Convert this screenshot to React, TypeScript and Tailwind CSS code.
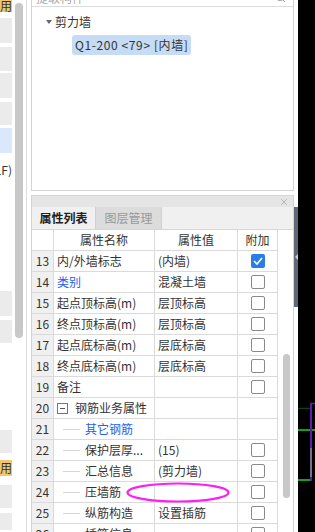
import React from "react";
import { Search, X } from "lucide-react";

type Row = {
  n: number;
  name: string;
  value?: string;
  blue?: boolean;
  check?: "on" | "off";
  group?: boolean;
  child?: boolean;
  mark?: boolean;
};

const rows: Row[] = [
  { n: 13, name: "内/外墙标志", value: "(内墙)", check: "on" },
  { n: 14, name: "类别", value: "混凝土墙", blue: true, check: "off" },
  { n: 15, name: "起点顶标高(m)", value: "层顶标高", check: "off" },
  { n: 16, name: "终点顶标高(m)", value: "层顶标高", check: "off" },
  { n: 17, name: "起点底标高(m)", value: "层底标高", check: "off" },
  { n: 18, name: "终点底标高(m)", value: "层底标高", check: "off" },
  { n: 19, name: "备注", value: "", check: "off" },
  { n: 20, name: "钢筋业务属性", group: true },
  { n: 21, name: "其它钢筋", child: true, blue: true },
  { n: 22, name: "保护层厚...", value: "(15)", child: true, check: "off" },
  { n: 23, name: "汇总信息", value: "(剪力墙)", child: true, check: "off" },
  { n: 24, name: "压墙筋", value: "", child: true, check: "off", mark: true },
  { n: 25, name: "纵筋构造", value: "设置插筋", child: true, check: "off" },
  { n: 26, name: "插筋信息", value: "", child: true, check: "off" },
];

// left list blocks, top to bottom
const leftItems = [
  { cls: "h-[12px] bg-[#f3c56e]", text: "用" },
  { cls: "mt-[6px] h-[25px] bg-[#ebebeb]" },
  { cls: "mt-[4px] h-[24px] bg-[#ebebeb]" },
  { cls: "mt-[2px] h-[25px] bg-[#ebebeb]" },
  { cls: "mt-[4px] h-[23px] bg-[#ebebeb]" },
  { cls: "mt-[3px] h-[25px] bg-[#dbe8fb]" },
  { cls: "mt-[10px] h-[14px]", text: "(1F)" },
  { cls: "mt-[114px] h-[25px] bg-[#ebebeb]" },
  { cls: "mt-[4px] h-[23px] bg-[#ebebeb]" },
  { cls: "mt-[87px] h-[23px] bg-[#ebebeb]" },
  { cls: "mt-[7px] h-[16px] bg-[#f3c56e]", text: "用" },
  { cls: "mt-[9px] h-[23px] bg-[#ebebeb]" },
  { cls: "mt-[5px] h-[17px] bg-[#ebebeb]" },
];

const CheckBox = ({ on }: { on: boolean }) =>
  on ? (
    <div className="w-[14px] h-[14px] rounded-[2px] bg-[#2b7de6] flex items-center justify-center">
      <svg width="10" height="8" viewBox="0 0 10 8">
        <path d="M1 4 L4 7 L9 1" fill="none" stroke="white" strokeWidth="1.6" />
      </svg>
    </div>
  ) : (
    <div className="w-[14px] h-[14px] rounded-[2px] border border-[#8a8a8a] bg-white" />
  );

export default function App() {
  return (
    <div className="flex w-[315px] h-[532px] overflow-hidden bg-white text-[12px] text-[#333] font-['Noto_Sans_CJK_SC',sans-serif]">
      {/* left strip */}
      <div className="flex w-[27px] shrink-0 border-r border-[#dcdcdc]">
        <div className="flex flex-col w-[12px] shrink-0">
          {leftItems.map((it, i) => (
            <div
              key={i}
              className={`${it.cls} shrink-0 overflow-hidden flex items-center justify-end leading-none whitespace-nowrap`}
            >
              {it.text}
            </div>
          ))}
        </div>
        <div className="ml-[3px] mt-[3px] w-[8px] h-[335px] rounded-full bg-[#c8c8c8]" />
      </div>
      <div className="w-[4px] shrink-0" />

      {/* main panel */}
      <div className="flex flex-col w-[263px] shrink-0">
        <div className="h-[191px] shrink-0 border-x border-b border-[#d4d4d4] flex flex-col">
          <div className="h-[7px] shrink-0 overflow-hidden border-b border-[#dcdcdc] flex justify-between pl-[4px] pr-[7px]">
            <span className="-mt-[10px] leading-[16px] text-[#aaa]">提取构件</span>
            <Search size={11} className="-mt-[8px] text-[#999]" />
          </div>
          <div className="flex items-center h-[18px] mt-[6px] pl-[14px]">
            <svg width="6" height="4" viewBox="0 0 6 4">
              <path d="M0 0 H6 L3 4 Z" fill="#666" />
            </svg>
            <span className="ml-[3px] leading-none">剪力墙</span>
          </div>
          <div className="flex mt-[4px] pl-[40px]">
            <div className="h-[20px] flex items-center px-[3px] rounded-[3px] bg-[#c6dcf4] leading-none whitespace-nowrap tracking-[0.6px]">
              Q1-200 &lt;79&gt; [内墙]
            </div>
          </div>
        </div>
        <div className="h-[4px] shrink-0" />

        <div className="flex flex-col flex-1 border-x border-[#d4d4d4] min-h-0">
          <div className="h-[12px] shrink-0 bg-[#e5e5e5] border-t border-[#d6d6d6] flex items-center justify-end pr-[4px]">
            <X size={10} className="text-[#999]" strokeWidth={1.5} />
          </div>
          <div className="h-[23px] shrink-0 bg-[#f0f0f0] border-b border-[#d6d6d6] flex">
            <div className="w-[64px] flex items-center justify-center font-bold text-[#222] border-r border-[#d0d0d0] leading-none">
              属性列表
            </div>
            <div className="w-[66px] flex items-center justify-center bg-[#dcdcdc] text-[#999] border-r border-[#d0d0d0] leading-none">
              图层管理
            </div>
          </div>

          <div className="flex">
            <div className="w-[246px] shrink-0 flex flex-col">
              <div className="grid grid-cols-[22px_101px_83px_40px] h-[21px] border-b border-[#dadada]">
                <div className="border-r border-[#dadada]" />
                <div className="border-r border-[#dadada] flex items-center justify-center leading-none">属性名称</div>
                <div className="border-r border-[#dadada] flex items-center justify-center leading-none">属性值</div>
                <div className="border-r border-[#dadada] flex items-center justify-center leading-none">附加</div>
              </div>
              {rows.map((r) => (
                <div
                  key={r.n}
                  className="relative grid grid-cols-[22px_101px_83px_40px] h-[21px] shrink-0 border-b border-[#dadada]"
                >
                  <div className="bg-[#f0f0f0] border-r border-[#dadada] flex items-center justify-center leading-none">
                    {r.n}
                  </div>
                  <div
                    className={`border-r border-[#dadada] flex items-center leading-none whitespace-nowrap overflow-hidden ${
                      r.blue ? "text-[#1d5ff0]" : ""
                    }`}
                  >
                    {r.group && (
                      <div className="ml-[3px] mr-[7px] w-[11px] h-[11px] border border-[#777] flex items-center justify-center">
                        <div className="w-[5px] h-px bg-[#555]" />
                      </div>
                    )}
                    {r.child && <div className="ml-[9px] mr-[5px] w-[17px] h-px bg-[#d6d6d6]" />}
                    {!r.group && !r.child && <div className="w-[3px]" />}
                    {r.name}
                  </div>
                  <div className="border-r border-[#dadada] flex items-center pl-[3px] leading-none whitespace-nowrap">
                    {r.value}
                  </div>
                  <div className="border-r border-[#dadada] flex items-center justify-center">
                    {r.check && <CheckBox on={r.check === "on"} />}
                  </div>
                  {r.mark && (
                    <svg className="absolute left-[94px] top-0" width="104" height="21" viewBox="0 0 104 21">
                      <ellipse cx="52" cy="10.5" rx="50.5" ry="9" fill="none" stroke="#ff1ef2" strokeWidth="2.2" />
                    </svg>
                  )}
                </div>
              ))}
            </div>
            <div className="w-[15px] shrink-0 pt-[124px] pl-[5px]">
              <div className="w-[7px] h-[144px] rounded-full bg-[#c8c8c8]" />
            </div>
          </div>
        </div>
      </div>

      {/* splitter */}
      <div className="w-[4px] shrink-0 pt-[207px]">
        <div className="h-[100px] bg-[#5e6975] pt-[47px] pl-[1px]">
          <svg width="3" height="6" viewBox="0 0 3 6">
            <path d="M3 0 V6 L0 3 Z" fill="#c9cdd2" />
          </svg>
        </div>
      </div>

      {/* canvas */}
      <div className="w-[17px] shrink-0 bg-black">
        <svg width="17" height="532" viewBox="0 0 17 532">
          <line x1="0" y1="408.5" x2="12" y2="408.5" stroke="#0e3f0e" strokeWidth="1.5" />
          <line x1="0" y1="430" x2="17" y2="430" stroke="#17a017" strokeWidth="2" />
          <line x1="0" y1="480" x2="12" y2="480" stroke="#17a017" strokeWidth="2" />
          <line x1="13" y1="403" x2="13" y2="481" stroke="#5a20a8" strokeWidth="2" />
          <line x1="12" y1="403.5" x2="17" y2="403.5" stroke="#5a20a8" strokeWidth="1.5" />
          <line x1="13" y1="448" x2="13" y2="477" stroke="#8a8a8a" strokeWidth="1.5" />
        </svg>
      </div>
    </div>
  );
}
